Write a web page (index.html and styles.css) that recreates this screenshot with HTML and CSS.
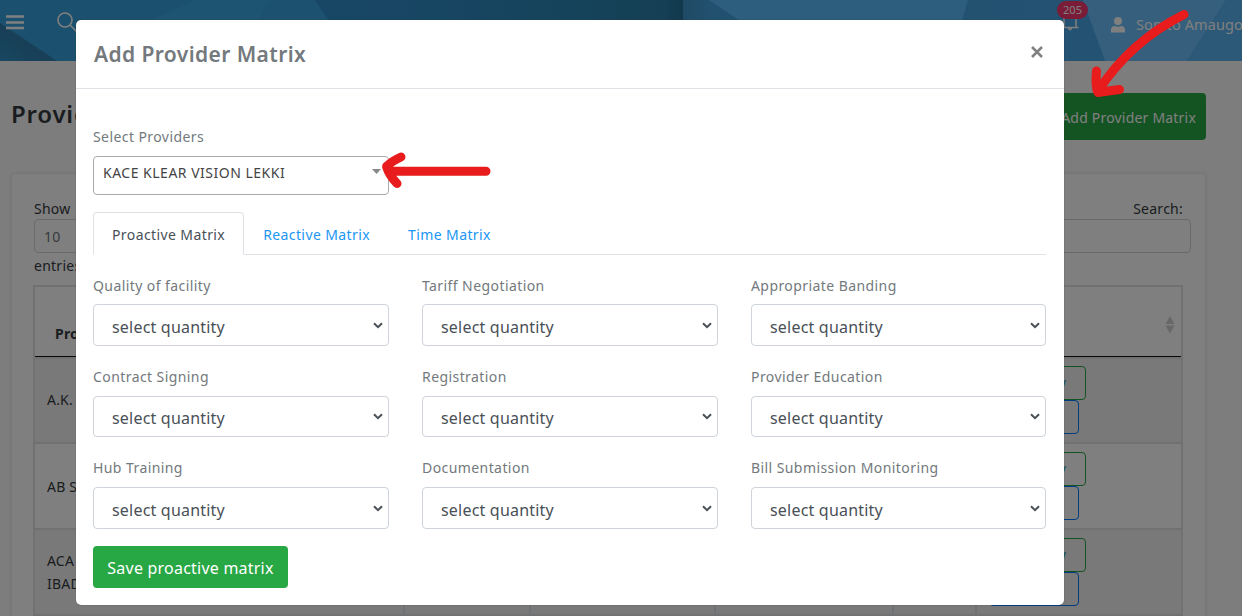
FILE: index.html
```html
<!DOCTYPE html>
<html lang="en">
<head>
<meta charset="utf-8">
<title>Provider Matrix</title>
<link rel="stylesheet" href="styles.css">
</head>
<body>
<div class="page">
  <header class="topbar">
    <svg class="topbar-art" width="1242" height="61" viewBox="0 0 1242 61" preserveAspectRatio="none">
      <defs>
        <linearGradient id="mid" x1="0" x2="1"><stop offset="0" stop-color="#308ecc"/><stop offset=".35" stop-color="#2f8cc6"/><stop offset=".75" stop-color="#2a86b4"/><stop offset=".95" stop-color="#2a7ea8"/><stop offset="1" stop-color="#247098"/></linearGradient>
        <linearGradient id="blue" x1="0" x2="1"><stop offset="0" stop-color="#3e94c8"/><stop offset=".05" stop-color="#44a2e0"/><stop offset="1" stop-color="#48a6e6"/></linearGradient>
        <linearGradient id="corner" gradientUnits="userSpaceOnUse" x1="34" y1="38" x2="10" y2="72"><stop offset="0" stop-color="#2e84b4"/><stop offset=".25" stop-color="#307fae"/><stop offset="1" stop-color="#3191c6"/></linearGradient>
      </defs>
      <rect width="1242" height="61" fill="#36a0dc"/>
      <path d="M195 0H270L253 30H130Z" fill="#3ba8e4"/>
      <path d="M270 0H315L335 30H253Z" fill="#38a4e0"/>
      <path d="M0 23 57 61H0Z" fill="url(#corner)"/>
      <path d="M315 0H683V61H355Z" fill="url(#mid)"/>
      <path d="M683 0H1242V61H683Z" fill="url(#blue)"/>
      <path d="M709 0H968L950 61H800Z" fill="#5abcfa"/>
      <path d="M1083 0H1226L1187 61H1105Z" fill="#6abefa"/>
      <path d="M1226 0H1242V61H1187Z" fill="#5ab2f0"/>
    </svg>
    <svg class="menu-icon" width="18" height="15" viewBox="0 0 18 15"><path d="M0 1.500H18M0 7.500H18M0 13H18" stroke="#fff" stroke-width="2.500"/></svg>
    <svg class="search-icon" width="21" height="21" viewBox="0 0 21 21" fill="none" stroke="#fff" stroke-width="1.600"><circle cx="8" cy="8" r="7"/><path d="M13 13 20 20"/></svg>
    <div class="alerts">
      <svg width="22" height="22" viewBox="0 0 22 22" fill="none" stroke="#fff" stroke-width="1.500"><path d="M2 17.500H19.500M5 17V7M17 17V7M9.500 18Q11 21.500 12.500 18"/></svg>
      <span class="badge">205</span>
    </div>
    <svg class="user-icon" width="14" height="16" viewBox="0 0 14 16" fill="#fff"><circle cx="7" cy="4" r="4"/><path d="M0 15.500V13Q0 9 4 9Q7 10.600 10 9Q14 9 14 13V15.500Z"/></svg>
    <span class="user-name">Somto Amaugo</span>
  </header>

  <div class="heading">
    <h1>Providers</h1>
    <button class="add-button">Add Provider Matrix</button>
  </div>

  <section class="card">
    <div class="filters">
      <div class="length"><span>Show</span><div class="filter-box">10</div><span>entries</span></div>
      <div class="search"><span>Search:</span><div class="filter-box"></div></div>
    </div>
    <table class="providers">
      <colgroup><col class="c1"><col class="c2"><col class="c3"><col class="c4"><col class="c5"><col class="c6"></colgroup>
      <thead><tr><th>Provider</th><th></th><th></th><th></th><th></th><th><svg class="sort" width="10" height="18" viewBox="0 0 10 18" fill="#d0d0d0"><path d="M5 0 9.500 8H.5ZM.5 9.500H9.500L5 17.500Z"/></svg></th></tr></thead>
      <tbody>
        <tr><td>A.K.</td><td></td><td></td><td></td><td></td><td><div class="actions"><span class="act green">History</span><span class="act blue"></span></div></td></tr>
        <tr><td>AB S</td><td></td><td></td><td></td><td></td><td><div class="actions"><span class="act green">History</span><span class="act blue"></span></div></td></tr>
        <tr><td>ACA<br>IBADAN</td><td></td><td></td><td></td><td></td><td><div class="actions"><span class="act green">History</span><span class="act blue"></span></div></td></tr>
      </tbody>
    </table>
  </section>
</div>

<div class="backdrop">
  <div class="modal">
    <div class="modal-header">
      <h2>Add Provider Matrix</h2>
      <svg class="close" width="12" height="12" viewBox="0 0 12 12"><path d="M1 1 11 11M11 1 1 11" stroke="#808080" stroke-width="2.500"/></svg>
    </div>
    <div class="modal-body">
      <label class="label">Select Providers</label>
      <div class="combo"><span>KACE KLEAR VISION LEKKI</span><svg width="9" height="5" viewBox="0 0 9 5"><path d="M0 0H9L4.500 5Z" fill="#888"/></svg></div>
      <nav class="tabs"><a class="tab active">Proactive Matrix</a><a class="tab">Reactive Matrix</a><a class="tab">Time Matrix</a></nav>
      <div class="fields">
        <div class="field"><label class="label">Quality of facility</label><div class="select"><span>select quantity</span><svg class="chev" viewBox="0 0 10 7"><path d="M1 1.200 5 5.200 9 1.200"/></svg></div></div>
        <div class="field"><label class="label">Tariff Negotiation</label><div class="select"><span>select quantity</span><svg class="chev" viewBox="0 0 10 7"><path d="M1 1.200 5 5.200 9 1.200"/></svg></div></div>
        <div class="field"><label class="label">Appropriate Banding</label><div class="select"><span>select quantity</span><svg class="chev" viewBox="0 0 10 7"><path d="M1 1.200 5 5.200 9 1.200"/></svg></div></div>
        <div class="field mid"><label class="label">Contract Signing</label><div class="select"><span>select quantity</span><svg class="chev" viewBox="0 0 10 7"><path d="M1 1.200 5 5.200 9 1.200"/></svg></div></div>
        <div class="field mid"><label class="label">Registration</label><div class="select"><span>select quantity</span><svg class="chev" viewBox="0 0 10 7"><path d="M1 1.200 5 5.200 9 1.200"/></svg></div></div>
        <div class="field mid"><label class="label">Provider Education</label><div class="select"><span>select quantity</span><svg class="chev" viewBox="0 0 10 7"><path d="M1 1.200 5 5.200 9 1.200"/></svg></div></div>
        <div class="field last"><label class="label">Hub Training</label><div class="select"><span>select quantity</span><svg class="chev" viewBox="0 0 10 7"><path d="M1 1.200 5 5.200 9 1.200"/></svg></div></div>
        <div class="field last"><label class="label">Documentation</label><div class="select"><span>select quantity</span><svg class="chev" viewBox="0 0 10 7"><path d="M1 1.200 5 5.200 9 1.200"/></svg></div></div>
        <div class="field last"><label class="label">Bill Submission Monitoring</label><div class="select"><span>select quantity</span><svg class="chev" viewBox="0 0 10 7"><path d="M1 1.200 5 5.200 9 1.200"/></svg></div></div>
      </div>
      <button class="save">Save proactive matrix</button>
    </div>
  </div>
</div>

<svg class="annotations" width="1242" height="616" viewBox="0 0 1242 616" fill="none" stroke="#e81c1c" stroke-width="9" stroke-linecap="round" stroke-linejoin="round">
  <path d="M1184 14.500Q1131 41 1098 91M1096.500 71Q1095 87 1098 92.500Q1108 91 1119.500 89.500"/>
  <path d="M486 171.300H389M401 157Q392 161 386.500 166.500Q389 175 397 183.500"/>
</svg>
</body>
</html>
```
FILE: styles.css
```css
* { box-sizing: border-box; }
body { margin: 0; width: 1242px; height: 616px; overflow: hidden; position: relative; font-family: "Noto Sans", "Open Sans", sans-serif; font-size: 14px; color: #343a40; }
button { border: 0; font-family: inherit; }
.page { height: 616px; overflow: hidden; background: #fafafa; }

.topbar { position: relative; height: 61px; display: flex; align-items: flex-start; overflow: hidden; white-space: nowrap; color: #fff; }
.topbar > * { position: relative; flex: none; }
.topbar .topbar-art { position: absolute; left: 0; top: 0; }
.menu-icon { margin: 15px 0 0 6px; }
.search-icon { margin: 12px 0 0 33px; }
.alerts { margin: 10px 0 0 981px; width: 22px; height: 22px; }
.badge { position: absolute; left: -2px; top: -9px; width: 31px; height: 18px; border-radius: 9px; background: #f5366f; font-size: 11px; line-height: 18px; text-align: center; }
.user-icon { margin: 17px 0 0 30px; }
.user-name { margin: 14px 0 0 11px; font-size: 14.5px; line-height: 21px; letter-spacing: .1px; }

.heading { display: flex; justify-content: space-between; padding: 32px 36px 0 11px; height: 113px; }
h1 { margin: 3px 0 0; font-size: 24px; line-height: 36px; font-weight: 600; letter-spacing: .8px; color: #343a40; }
.add-button { width: 160px; height: 47px; border-radius: 4px; background: #28a745; color: #fff; font-size: 14px; letter-spacing: .2px; padding: 1px 10px 0 0; text-align: right; white-space: nowrap; }

.card { margin: 0 37px 0 12px; height: 500px; padding: 25px 23px 0 22px; background: #fff; border-radius: 4px; box-shadow: 0 0 4px rgba(0,0,0,.12); }
.filters { display: flex; justify-content: space-between; height: 86px; line-height: 20px; letter-spacing: .25px; }
.length, .search { display: flex; flex-direction: column; }
.filter-box { width: 80px; height: 34px; border: 1px solid #ced4da; border-radius: 4px; padding: 7px 9px; color: #6c757d; }
.search { align-items: flex-end; width: 220px; margin-right: -9px; }
.search span { margin-right: 8px; }
.search .filter-box { width: 220px; }
.length span:last-child { margin-top: 3px; }
.providers { width: 1148px; margin-left: -1px; border-collapse: collapse; table-layout: fixed; letter-spacing: .2px; }
.c1 { width: 370px; } .c2 { width: 126px; } .c3 { width: 185px; } .c4 { width: 178px; } .c5 { width: 83px; } .c6 { width: 206px; }
.providers th, .providers td { border: 2px solid #dee2e6; padding: 0 12px; text-align: left; }
.providers th { height: 70px; border-bottom: 1px solid #111; padding: 24px 6px 0 20px; }
.providers td { height: 86px; line-height: 23px; }
.providers tbody tr:first-child td { border-top: 0; height: 87px; padding-top: 1px; box-shadow: inset 0 2px #dee2e6; }
.providers tbody tr:nth-child(odd) { background: #f2f2f2; }
.sort { display: block; margin: -17px 0 0 auto; }
.actions { display: flex; flex-direction: column; align-items: flex-start; }
.act { height: 34px; border: 1px solid #28a745; border-radius: 4px; width: 97px; color: #17a2b8; line-height: 32px; text-align: right; padding-right: 19px; }
.blue { border-color: #007bff; width: 90px; }

.backdrop { position: absolute; inset: 0; background: rgba(0,0,0,.5); padding: 20px 178px 0 76px; }
.modal { width: 988px; height: 585px; background: #fff; border-radius: 5px; box-shadow: 0 0 1px #333; }
.modal-header { height: 69px; border-bottom: 1px solid #dee2e6; display: flex; justify-content: space-between; align-items: center; padding: 0 21px 4px 18px; }
h2 { margin: 0; padding-top: 3px; font-size: 21px; line-height: 30px; font-weight: 600; letter-spacing: .4px; color: #73797c; }
.modal-body { padding: 38px 18px 0 17px; }
.label { display: block; height: 20px; line-height: 20px; font-size: 14px; letter-spacing: .42px; color: #73797c; white-space: nowrap; }
.combo { width: 296px; height: 39px; margin-top: 9px; border: 1px solid #aaa; border-radius: 4px; display: flex; justify-content: space-between; padding: 6px 7px 0 9px; line-height: 20px; letter-spacing: .5px; color: #444; }
.combo svg { margin-top: 6px; }
.tabs { margin-top: 17px; height: 43px; display: flex; border-bottom: 1px solid #dee2e6; }
.tab { height: 43px; padding: 0 18px; border: 1px solid transparent; border-radius: 4px 4px 0 0; line-height: 43px; color: #2196f3; letter-spacing: .4px; white-space: nowrap; }
.active { color: #495057; background: #fff; border-color: #dee2e6 #dee2e6 #fff; }
.fields { display: grid; grid-template-columns: 296px 296px 295px; gap: 20px 33px; padding-top: 21px; }
.field { height: 71px; }
.select { height: 42px; margin-top: 8px; border: 1px solid #ced4da; border-radius: 4px; padding: 3px 5px 0 18px; display: flex; align-items: center; justify-content: space-between; font-size: 16px; letter-spacing: .2px; color: #495057; }
.mid .select { height: 41px; margin-top: 9px; }
.last .select { margin-top: 9px; }
.chev { width: 10px; height: 7px; margin-top: -3px; fill: none; stroke: #495057; stroke-width: 2; }
.save { display: block; width: 195px; height: 42px; margin-top: 17px; border-radius: 4px; background: #28a745; color: #fff; font-size: 16px; letter-spacing: .22px; padding: 1px 0 0; white-space: nowrap; }
.annotations { position: absolute; left: 0; top: 0; }
```
